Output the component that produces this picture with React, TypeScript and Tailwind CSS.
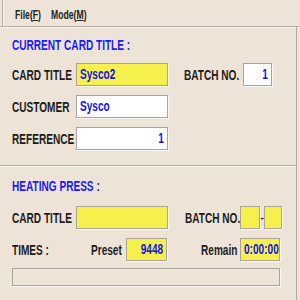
import type { ReactNode } from "react"

const font = { fontFamily: '"Liberation Sans", Arial, sans-serif' }

function Txt({ children, right, className = "" }: { children: ReactNode; right?: boolean; className?: string }) {
  return (
    <span
      className={`inline-block whitespace-nowrap scale-x-[0.72] ${right ? "origin-right" : "origin-left"} ${className}`}
    >
      {children}
    </span>
  )
}

function Box({ w, yellow, children, right }: { w: string; yellow?: boolean; children?: ReactNode; right?: boolean }) {
  return (
    <div
      className={`${w} h-[23px] shrink-0 flex items-center px-[3px] border border-[#a9a39b] shadow-[1px_1px_0_#fbf8f4] ${
        yellow ? "bg-[#f6f04c]" : "bg-white"
      } ${right ? "justify-end" : "justify-start"} text-[14px] font-bold text-[#1010f0]`}
    >
      {children && <Txt right={right}>{children}</Txt>}
    </div>
  )
}

function Label({ w, children }: { w: string; children: ReactNode }) {
  return (
    <div className={`${w} shrink-0 text-[14px] font-bold text-[#1c1c1c] leading-none`}>
      <Txt>{children}</Txt>
    </div>
  )
}

export default function App() {
  return (
    <div className="w-[300px] h-[300px] overflow-hidden bg-[#eee3d7] flex flex-col" style={font}>
      {/* menu bar */}
      <div className="h-[27px] flex items-center border-b border-[#b3aba2] shadow-[0_1px_0_#fbf7f2]">
        <div className="ml-[2px] h-full w-[2px] border-l border-[#b3aba2] bg-[#fbf7f2]" />
        <div className="ml-[11px] pt-[3px] flex text-[12px] font-bold text-[#222]">
          <div className="w-[36px]">
            <Txt>
              File(<span className="underline">F</span>)
            </Txt>
          </div>
          <Txt>
            Mode(<span className="underline">M</span>)
          </Txt>
        </div>
      </div>

      <div className="flex-1 flex flex-col w-[297px] border-r border-[#b3aba2]">
        {/* current card */}
        <section className="h-[139px] pl-[12px] pt-[10px] border-b border-[#b3aba2] shadow-[0_1px_0_#fbf7f2]">
          <div className="text-[14px] font-bold text-[#1a1aff] leading-[16px]">
            <Txt>CURRENT CARD TITLE :</Txt>
          </div>
          <div className="mt-[10px] flex flex-col gap-[9px]">
            <div className="flex items-center">
              <Label w="w-[64px]">CARD TITLE</Label>
              <Box w="w-[92px]" yellow>
                Sysco2
              </Box>
              <div className="ml-[16px]">
                <Label w="w-[59px]">BATCH NO.</Label>
              </div>
              <Box w="w-[29px]" right>
                1
              </Box>
            </div>
            <div className="flex items-center">
              <Label w="w-[64px]">CUSTOMER</Label>
              <Box w="w-[92px]">Sysco</Box>
            </div>
            <div className="flex items-center">
              <Label w="w-[64px]">REFERENCE</Label>
              <Box w="w-[92px]" right>
                1
              </Box>
            </div>
          </div>
        </section>

        {/* heating press */}
        <section className="flex-1 pl-[12px] pt-[12px]">
          <div className="text-[14px] font-bold text-[#1a1aff] leading-[16px]">
            <Txt>HEATING PRESS :</Txt>
          </div>
          <div className="mt-[12px] flex items-center">
            <Label w="w-[64px]">CARD TITLE</Label>
            <Box w="w-[92px]" yellow />
            <div className="ml-[17px]">
              <Label w="w-[55px]">BATCH NO.</Label>
            </div>
            <Box w="w-[20px]" yellow />
            <span className="w-[4px] text-center text-[11px] font-bold text-[#222]">-</span>
            <Box w="w-[18px]" yellow />
          </div>
          <div className="mt-[9px] flex items-center">
            <Label w="w-[79px]">TIMES :</Label>
            <Label w="w-[35px]">Preset</Label>
            <Box w="w-[41px]" yellow right>
              9448
            </Box>
            <div className="ml-[34px]">
              <Label w="w-[39px]">Remain</Label>
            </div>
            <Box w="w-[40px]" yellow>
              0:00:00
            </Box>
          </div>
          <div className="mt-[7px] w-[268px] h-[18px] border border-[#aaa49c] shadow-[1px_1px_0_#fbf8f4]" />
        </section>
      </div>
    </div>
  )
}
